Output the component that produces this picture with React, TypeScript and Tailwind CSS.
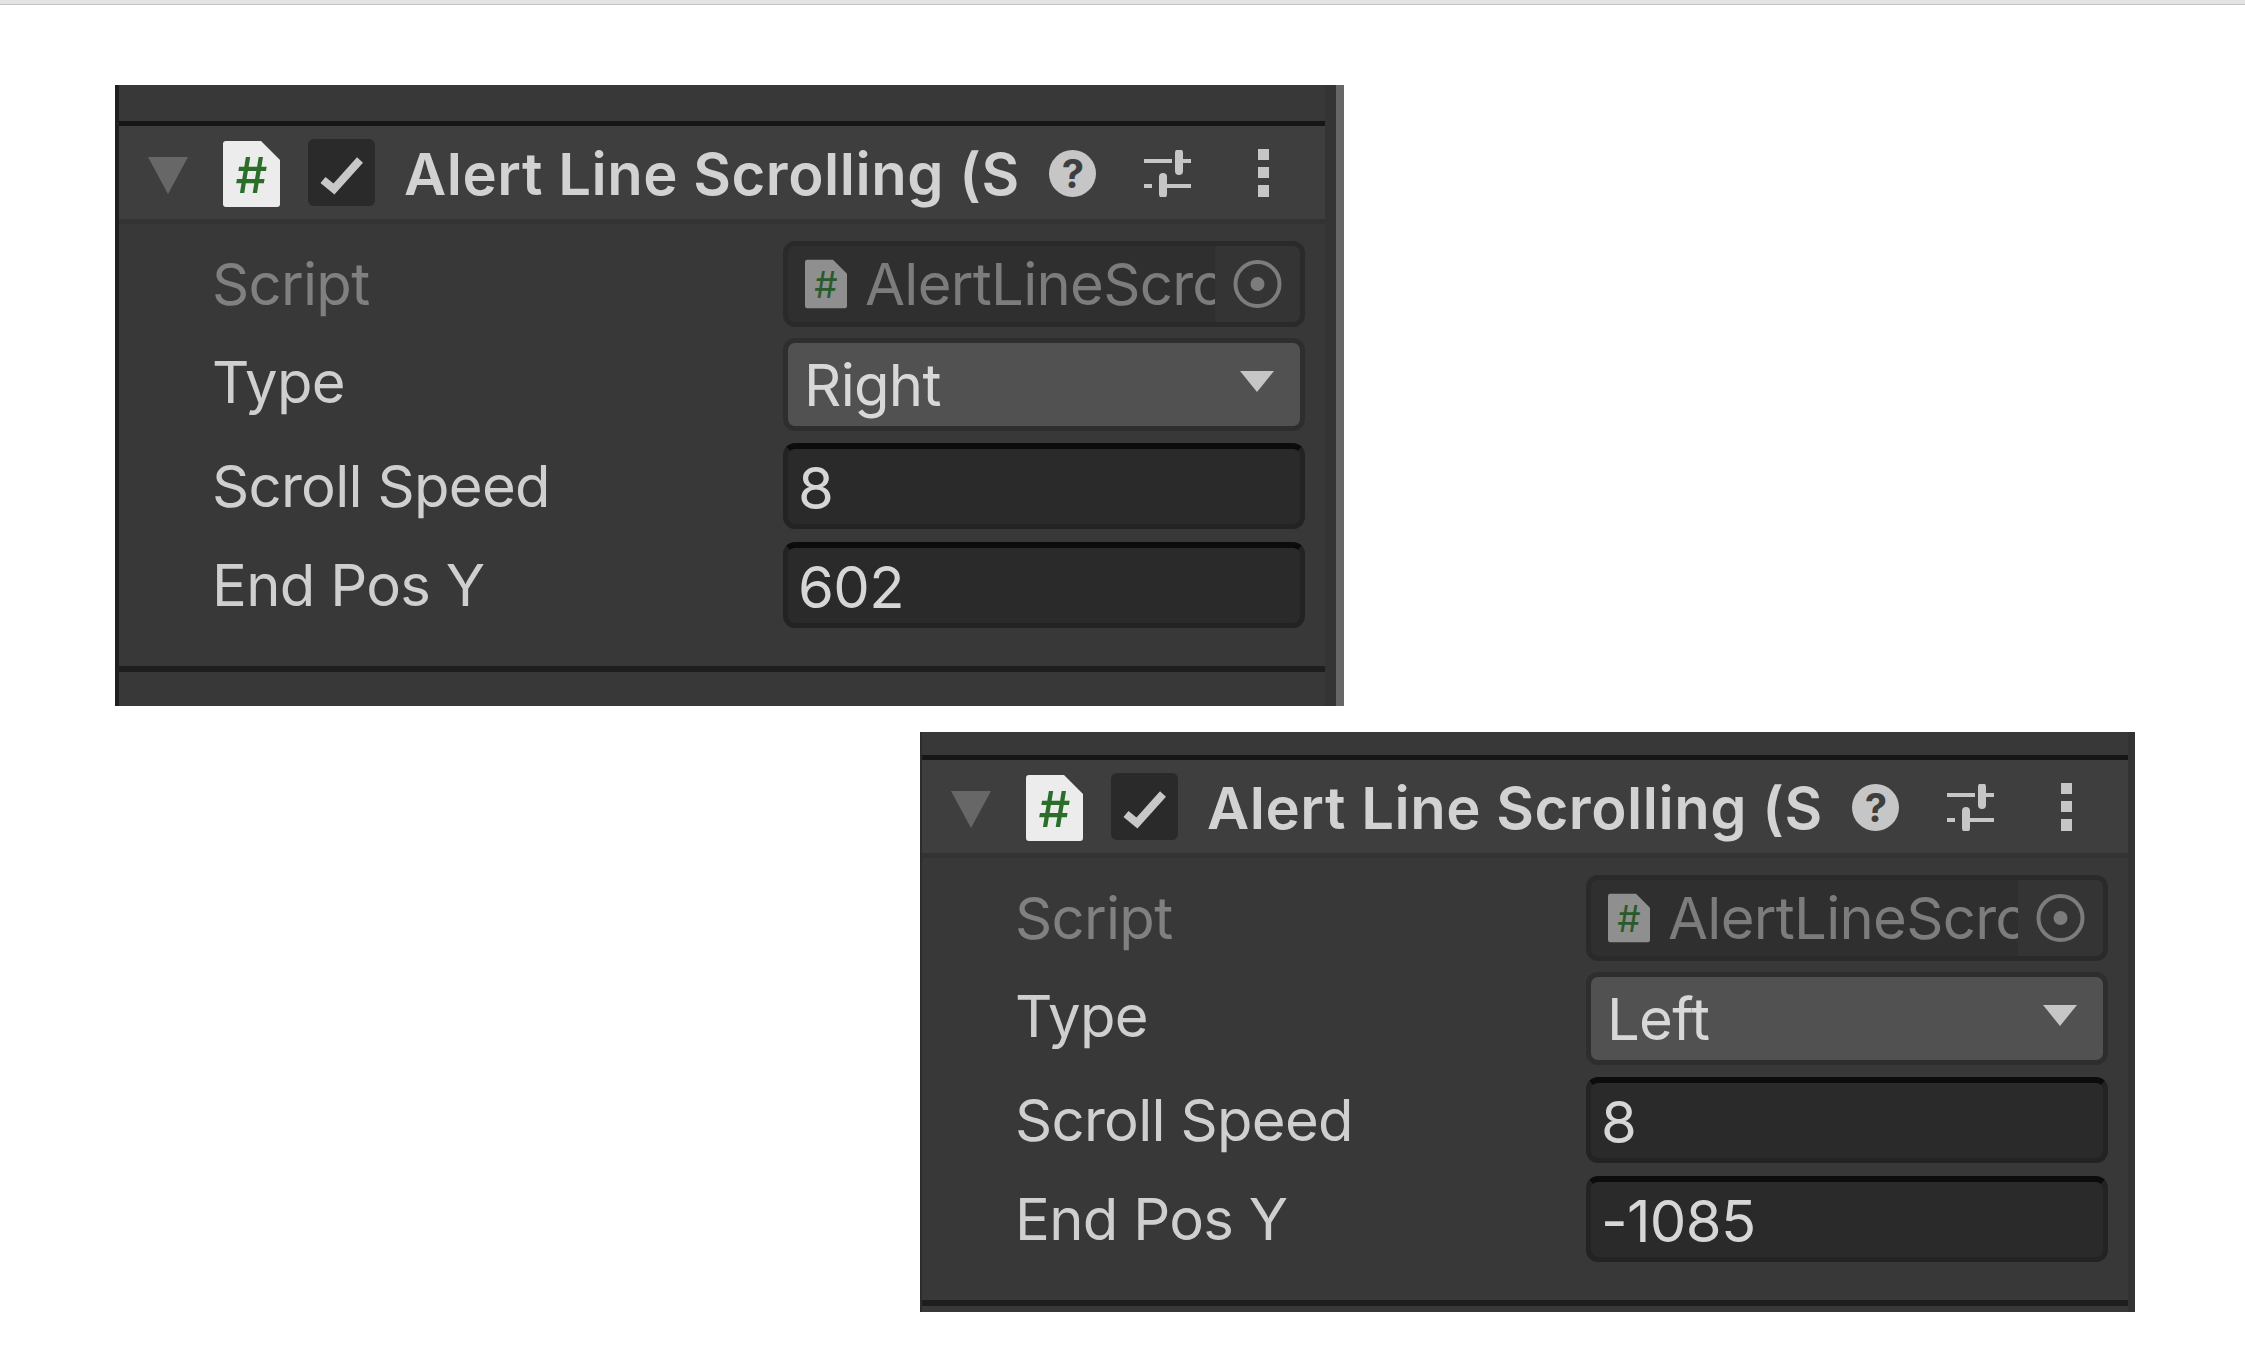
import React from 'react'

const FileIcon = ({ fill, hash, weight }: { fill: string; hash: string; weight: number }): JSX.Element => (
  <svg viewBox="0 0 57 66" className="h-full w-full">
    <path d="M3 0H38L57 19V63a3 3 0 0 1-3 3H3a3 3 0 0 1-3-3V3a3 3 0 0 1 3-3Z" fill={fill} />
    <text x="28" y="52" textAnchor="middle" fontFamily="Inter, sans-serif" fontWeight={weight} fontSize="50" fill={hash}>
      #
    </text>
  </svg>
)

const Header = (): JSX.Element => (
  <div className="flex h-[93px] items-center bg-[#3e3e3e]">
    <svg viewBox="0 0 40 37" className="ml-[29px] mt-[6px] h-[37px] w-[40px] shrink-0">
      <path d="M0 0H40L20 37Z" fill="#676767" />
    </svg>
    <div className="ml-[35px] mt-[3px] h-[66px] w-[57px] shrink-0">
      <FileIcon fill="#ececec" hash="#2a6e2a" weight={500} />
    </div>
    <div className="ml-[28px] flex h-[67px] w-[67px] shrink-0 items-center justify-center rounded-[6px] bg-[#2a2a2a]">
      <svg viewBox="0 0 67 67" className="h-[67px] w-[67px]">
        <path d="M15 41L26 50L52 21" fill="none" stroke="#c8c8c8" strokeWidth="8" />
      </svg>
    </div>
    <div className="ml-[29px] mt-[3px] w-[626px] shrink-0 overflow-hidden whitespace-nowrap text-[58px] font-semibold leading-[70px] tracking-[0.55px] text-[#d2d2d2]">
      Alert Line Scrolling (S
    </div>
    <svg viewBox="0 0 47 47" className="ml-[19px] mt-[2px] h-[47px] w-[47px] shrink-0">
      <circle cx="23.5" cy="23.5" r="23.5" fill="#c6c6c6" />
      <text x="23.5" y="38" textAnchor="middle" fontFamily="Inter, sans-serif" fontWeight="700" fontSize="40" fill="#3e3e3e">
        ?
      </text>
    </svg>
    <svg viewBox="0 0 47 47" className="ml-[48px] mt-[2px] h-[47px] w-[47px] shrink-0" fill="none" stroke="#c6c6c6">
      <path d="M0 11H28M35 11H47M0 36H8M18 36H47" strokeWidth="4" />
      <path d="M35 3V21M19 27V44" strokeWidth="8" strokeLinecap="round" />
    </svg>
    <svg viewBox="0 0 11 48" className="ml-[67px] mt-[1px] h-[48px] w-[11px] shrink-0" fill="#c6c6c6">
      <rect y="0" width="11" height="11" />
      <rect y="18" width="11" height="11" />
      <rect y="36" width="11" height="12" />
    </svg>
  </div>
)

const Label = ({ text, dim, lift }: { text: string; dim?: boolean; lift?: boolean }): JSX.Element => (
  <div className={`ml-[93px] w-[571px] shrink-0 whitespace-nowrap ${dim ? 'text-[#808080]' : 'text-[#cfcfcf]'} ${lift ? 'mb-[5px]' : ''}`}>
    {text}
  </div>
)

const NumberRow = ({ label, value }: { label: string; value: string }): JSX.Element => (
  <div className="flex items-center">
    <Label text={label} />
    <div className="flex h-[86px] w-[522px] items-center rounded-[12px] border-[5px] border-[#232323] border-t-[6px] border-t-[#0c0c0c] bg-[#2a2a2a] pl-[10px] pt-[3px] text-[#d6d6d6]">
      {value}
    </div>
  </div>
)

const Panel = ({
  type,
  endPos,
  className,
  topClass,
  bottomClass,
  edge,
}: {
  type: string
  endPos: string
  className: string
  topClass: string
  bottomClass: string
  edge: React.ReactNode
}): JSX.Element => (
  <div className={`flex text-[58px] leading-[70px] tracking-[-0.7px] ${className}`}>
    <div className="flex min-w-0 flex-1 flex-col bg-[#383838]">
      <div className={topClass} />
      <div className="h-[5px] bg-[#161616]" />
      <Header />
      <div className="h-[5px] bg-[#333333]" />
      <div className="flex h-[442px] flex-col pt-[17px]">
        <div className="flex items-center">
          <Label text="Script" dim />
          <div className="flex h-[86px] w-[522px] items-center overflow-hidden rounded-[12px] border-[5px] border-[#2a2a2a] bg-[#2f2f2f] text-[#7c7c7c]">
            <div className="ml-[17px] h-[50px] w-[42px] shrink-0">
              <FileIcon fill="#8f8f8f" hash="#2a5a2a" weight={400} />
            </div>
            <div className="ml-[18px] w-[350px] shrink-0 overflow-hidden whitespace-nowrap">AlertLineScrolling</div>
            <div className="flex h-full flex-1 items-center justify-center bg-[#343434]">
              <svg viewBox="0 0 49 48" className="h-[48px] w-[49px]">
                <circle cx="24.5" cy="24" r="22" fill="none" stroke="#7c7c7c" strokeWidth="4" />
                <circle cx="24.5" cy="24" r="7" fill="#7c7c7c" />
              </svg>
            </div>
          </div>
        </div>
        <div className="mt-[11px] flex items-center">
          <Label text="Type" lift />
          <div className="flex h-[93px] w-[522px] items-center justify-between rounded-[12px] border-[5px] border-[#2e2e2e] bg-[#515151] pl-[16px] pr-[26px] text-[#d8d8d8]">
            {type}
            <svg viewBox="0 0 34 21" className="mb-[7px] h-[21px] w-[34px]">
              <path d="M0 0H34L17 21Z" fill="#c6c6c6" />
            </svg>
          </div>
        </div>
        <div className="mt-[12px]">
          <NumberRow label="Scroll Speed" value="8" />
        </div>
        <div className="mt-[13px]">
          <NumberRow label="End Pos Y" value={endPos} />
        </div>
      </div>
      <div className="h-[6px] bg-[#1e1e1e]" />
      <div className={bottomClass} />
    </div>
    {edge}
  </div>
)

export default function App(): JSX.Element {
  return (
    <div className="min-h-screen bg-white font-['Inter',sans-serif]">
      <div className="h-[5px] border-b border-[#c2c2c2] bg-[#e4e4e4]" />
      <Panel
        type="Right"
        endPos="602"
        className="ml-[115px] mt-[80px] w-[1229px] border-l-[4px] border-[#1f1f1f] blur-[0.6px]"
        topClass="h-[36px]"
        bottomClass="h-[34px]"
        edge={
          <>
            <div className="w-[11px] bg-[#343434]" />
            <div className="w-[8px] bg-[#666666]" />
          </>
        }
      />
      <Panel
        type="Left"
        endPos="-1085"
        className="ml-[920px] mt-[26px] w-[1215px] border-l-[2px] border-[#2c2c2c] blur-[0.6px]"
        topClass="h-[23px]"
        bottomClass="h-[6px]"
        edge={<div className="w-[7px] bg-[#333333]" />}
      />
    </div>
  )
}
